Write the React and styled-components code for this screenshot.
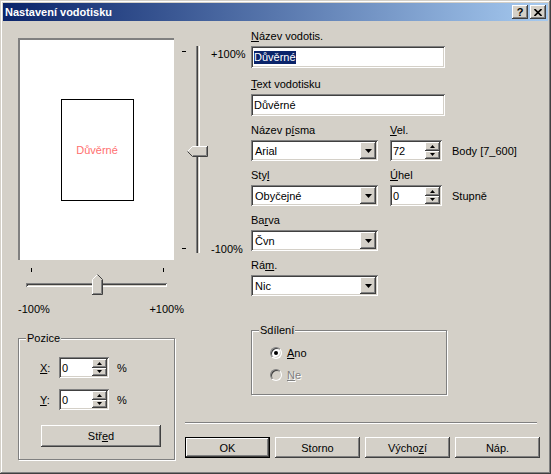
import React from 'react'
import styled, { createGlobalStyle } from 'styled-components'

const face = '#D4D0C8'

const raised = `box-shadow: inset -1px -1px #404040, inset 1px 1px #fff, inset -2px -2px #808080, inset 2px 2px ${face};`
const sunken = `box-shadow: inset 1px 1px #808080, inset -1px -1px #fff, inset 2px 2px #404040, inset -2px -2px ${face};`

const GlobalStyle = createGlobalStyle`
  html, body {
    margin: 0;
    padding: 0;
    background: ${face};
    overflow: hidden;
  }
`

const Window = styled.div`
  width: 551px;
  height: 474px;
  box-sizing: border-box;
  padding: 3px;
  background: ${face};
  box-shadow: inset -1px -1px #404040, inset 1px 1px ${face}, inset -2px -2px #808080, inset 2px 2px #fff;
  display: flex;
  flex-direction: column;
  font: 11px 'Liberation Sans', Arial, sans-serif;
  color: #000;
`

const TitleBar = styled.div`
  height: 18px;
  flex-shrink: 0;
  display: flex;
  align-items: center;
  padding: 0 2px 0 2px;
  background: linear-gradient(to right, #0a246a, #a6caf0);
  color: #fff;
  font-weight: bold;
`

const TitleText = styled.div`
  flex: 1;
  white-space: nowrap;
`

const CaptionButtons = styled.div`
  display: flex;
  gap: 2px;
`

const CaptionButton = styled.div`
  width: 16px;
  height: 14px;
  box-sizing: border-box;
  background: ${face};
  ${raised}
  display: flex;
  align-items: center;
  justify-content: center;
  color: #000;
  font-weight: bold;
  font-size: 11px;
  line-height: 14px;
`

const Body = styled.div`
  flex: 1;
  display: flex;
  padding: 0 8px 0 15px;
`

const LeftCol = styled.div`
  width: 157px;
  flex-shrink: 0;
  padding-top: 17px;
  display: flex;
  flex-direction: column;
`

const Preview = styled.div`
  width: 156px;
  height: 222px;
  box-sizing: border-box;
  background: #fff;
  border-top: 2px solid #808080;
  border-left: 2px solid #808080;
  display: flex;
  align-items: center;
  justify-content: center;
`

const Page = styled.div`
  width: 73px;
  height: 102px;
  box-sizing: border-box;
  border: 1px solid #000;
  display: flex;
  align-items: center;
  justify-content: center;
  color: #ff6f6f;
`

const HSlider = styled.div`
  position: relative;
  height: 38px;
  width: 157px;
`

const HTicks = styled.div`
  display: flex;
  justify-content: space-between;
  padding: 8px 11px 0 13px;
`

const HTick = styled.div`
  width: 1px;
  height: 4px;
  background: #000;
`

const HTrack = styled.div`
  margin: 11px 0 0 8px;
  width: 141px;
  height: 4px;
  box-sizing: border-box;
  ${sunken}
`

const HThumb = styled.svg`
  position: absolute;
  left: 74px;
  top: 14px;
`

const HLabels = styled.div`
  width: 166px;
  margin-top: 5px;
  display: flex;
  justify-content: space-between;
  line-height: 13px;
`

const GroupBox = styled.div`
  position: relative;
  border: 1px solid #808080;
  box-shadow: inset 1px 1px #fff, 1px 1px #fff;
  margin-top: ${p => p.$top}px;
  width: ${p => p.$width}px;
  box-sizing: border-box;
  padding: ${p => p.$pad};
`

const GroupTitle = styled.div`
  position: absolute;
  top: -7px;
  left: 7px;
  padding: 0 1px;
  background: ${face};
  line-height: 13px;
`

const PosRow = styled.div`
  display: flex;
  align-items: center;
  padding-left: 21px;
  margin-top: ${p => p.$top || 0}px;
`

const PosLabel = styled.div`
  width: 19px;
`

const Percent = styled.div`
  margin-left: 8px;
`

const Button = styled.div`
  width: ${p => p.$width || 85}px;
  height: ${p => p.$height || 21}px;
  box-sizing: border-box;
  background: ${face};
  display: flex;
  align-items: center;
  justify-content: center;
  margin: ${p => p.$margin || 0};
  ${p =>
    p.$default
      ? `box-shadow: inset 0 0 0 1px #000, inset -2px -2px #404040, inset 2px 2px #fff, inset -3px -3px #808080, inset 3px 3px ${face};`
      : raised}
`

const RightArea = styled.div`
  flex: 1;
  margin-left: 6px;
  display: flex;
  flex-direction: column;
`

const TopRow = styled.div`
  display: flex;
`

const VSlider = styled.div`
  width: 70px;
  flex-shrink: 0;
  padding-top: 23px;
  display: flex;
  align-items: flex-start;
`

const VLabels = styled.div`
  margin: 4px 0 0 3px;
  height: 208px;
  display: flex;
  flex-direction: column;
  justify-content: space-between;
  line-height: 13px;
`

const Fields = styled.div`
  display: flex;
  flex-direction: column;
  padding-top: 9px;
`

const FieldRow = styled.div`
  display: flex;
  gap: 12px;
  margin-top: ${p => p.$top || 0}px;
`

const Field = styled.div`
  display: flex;
  flex-direction: column;
  width: ${p => (p.$width ? `${p.$width}px` : 'auto')};
`

const Label = styled.div`
  line-height: 13px;
  white-space: nowrap;
  margin-bottom: 3px;
`

const TextBox = styled.div`
  width: ${p => p.$width}px;
  height: 22px;
  box-sizing: border-box;
  background: #fff;
  ${sunken}
  display: flex;
  align-items: center;
  padding: 0 3px;
  white-space: nowrap;
`

const Selected = styled.span`
  background: #0a246a;
  color: #fff;
  line-height: 13px;
`

const SelectBox = styled.div`
  width: 127px;
  height: 21px;
  box-sizing: border-box;
  background: #fff;
  ${sunken}
  display: flex;
  align-items: center;
  padding: 2px 2px 2px 4px;
`

const SelectText = styled.div`
  flex: 1;
`

const DropButton = styled.div`
  width: 16px;
  height: 17px;
  box-sizing: border-box;
  background: ${face};
  ${raised}
  display: flex;
  align-items: center;
  justify-content: center;
`

const SpinLine = styled.div`
  display: flex;
  align-items: center;
`

const SpinBox = styled.div`
  width: ${p => p.$width}px;
  height: 21px;
  box-sizing: border-box;
  background: #fff;
  ${sunken}
  display: flex;
  align-items: stretch;
  padding: 2px;
`

const SpinText = styled.div`
  flex: 1;
  display: flex;
  align-items: center;
  padding-left: 1px;
`

const SpinButtons = styled.div`
  width: 15px;
  display: flex;
  flex-direction: column;
`

const SpinButton = styled.div`
  flex: 1;
  background: ${face};
  ${raised}
  display: flex;
  align-items: center;
  justify-content: center;
`

const Unit = styled.div`
  margin-left: 10px;
  white-space: nowrap;
`

const RadioRow = styled.div`
  display: flex;
  align-items: center;
  gap: 5px;
  height: 16px;
  margin-top: ${p => p.$top || 0}px;
  color: ${p => (p.$disabled ? '#808080' : '#000')};
  text-shadow: ${p => (p.$disabled ? '1px 1px #fff' : 'none')};
`

const RadioCircle = styled.div`
  width: 12px;
  height: 12px;
  box-sizing: border-box;
  border-radius: 50%;
  border: 1px solid;
  border-color: #808080 #fff #fff #808080;
  box-shadow: inset 1px 1px #404040, inset -1px -1px ${face};
  background: ${p => (p.$disabled ? face : '#fff')};
  display: flex;
  align-items: center;
  justify-content: center;
`

const RadioDot = styled.div`
  width: 4px;
  height: 4px;
  border-radius: 50%;
  background: #000;
`

const Separator = styled.div`
  width: 352px;
  margin: 27px 0 0 4px;
  border-top: 1px solid #808080;
  border-bottom: 1px solid #fff;
`

const ButtonRow = styled.div`
  display: flex;
  gap: 5px;
  margin: 13px 0 0 4px;
`

const DownArrow = ({ w = 7 }) => (
  <svg width={w} height={(w + 1) / 2} viewBox={`0 0 ${w} ${(w + 1) / 2}`}>
    <polygon points={`0,0 ${w},0 ${w / 2},${(w + 1) / 2}`} fill="#000" />
  </svg>
)

const UpArrow = ({ w = 5 }) => (
  <svg width={w} height={(w + 1) / 2} viewBox={`0 0 ${w} ${(w + 1) / 2}`}>
    <polygon points={`0,${(w + 1) / 2} ${w},${(w + 1) / 2} ${w / 2},0`} fill="#000" />
  </svg>
)

const Select = ({ value }) => (
  <SelectBox>
    <SelectText>{value}</SelectText>
    <DropButton>
      <DownArrow />
    </DropButton>
  </SelectBox>
)

const Spin = ({ value, width }) => (
  <SpinBox $width={width}>
    <SpinText>{value}</SpinText>
    <SpinButtons>
      <SpinButton>
        <UpArrow />
      </SpinButton>
      <SpinButton>
        <DownArrow w={5} />
      </SpinButton>
    </SpinButtons>
  </SpinBox>
)

const UpThumb = () => (
  <HThumb width="11" height="21" viewBox="0 0 11 21">
    <polygon points="0,5 5,0 10,5 10,20 0,20" fill={face} />
    <polyline points="0.5,20 0.5,5.5 5.5,0.5" fill="none" stroke="#fff" />
    <polyline points="5.5,0.5 10.5,5.5 10.5,20.5 0,20.5" fill="none" stroke="#404040" />
    <polyline points="9.5,6 9.5,19.5 1,19.5" fill="none" stroke="#808080" />
  </HThumb>
)

const VerticalTrack = () => (
  <svg width="27" height="212" viewBox="0 0 27 212">
    <rect x="1" y="7" width="4" height="1" fill="#000" />
    <rect x="1" y="204" width="4" height="1" fill="#000" />
    <rect x="15" y="2" width="1" height="207" fill="#808080" />
    <rect x="16" y="2" width="1" height="207" fill="#404040" />
    <rect x="17" y="2" width="1" height="207" fill={face} />
    <rect x="18" y="2" width="1" height="207" fill="#fff" />
    <g transform="translate(6,102)">
      <polygon points="0,5 5,0 20,0 20,10 5,10" fill={face} />
      <polyline points="0.5,5.5 5.5,0.5 20,0.5" fill="none" stroke="#fff" />
      <polyline points="20.5,0 20.5,10.5 5.5,10.5 0.5,5.5" fill="none" stroke="#404040" />
      <polyline points="19.5,1 19.5,9.5 6,9.5" fill="none" stroke="#808080" />
    </g>
  </svg>
)

export default function App() {
  return (
    <>
      <GlobalStyle />
      <Window>
        <TitleBar>
          <TitleText>Nastavení vodotisku</TitleText>
          <CaptionButtons>
            <CaptionButton>?</CaptionButton>
            <CaptionButton>
              <svg width="8" height="7" viewBox="0 0 8 7">
                <path d="M0.5 0 L7.5 7 M7.5 0 L0.5 7" stroke="#000" strokeWidth="1.6" />
              </svg>
            </CaptionButton>
          </CaptionButtons>
        </TitleBar>

        <Body>
          <LeftCol>
            <Preview>
              <Page>Důvěrné</Page>
            </Preview>

            <HSlider>
              <HTicks>
                <HTick />
                <HTick />
              </HTicks>
              <HTrack />
              <UpThumb />
            </HSlider>

            <HLabels>
              <span>-100%</span>
              <span>+100%</span>
            </HLabels>

            <GroupBox $top={22} $width={157} $pad="18px 0 12px 0">
              <GroupTitle>Pozice</GroupTitle>
              <PosRow>
                <PosLabel>
                  <u>X</u>:
                </PosLabel>
                <Spin value="0" width={50} />
                <Percent>%</Percent>
              </PosRow>
              <PosRow $top={11}>
                <PosLabel>
                  <u>Y</u>:
                </PosLabel>
                <Spin value="0" width={50} />
                <Percent>%</Percent>
              </PosRow>
              <Button $width={120} $height={22} $margin="15px 0 0 22px">
                <span>
                  Stř<u>e</u>d
                </span>
              </Button>
            </GroupBox>
          </LeftCol>

          <RightArea>
            <TopRow>
              <VSlider>
                <VerticalTrack />
                <VLabels>
                  <span>+100%</span>
                  <span>-100%</span>
                </VLabels>
              </VSlider>

              <Fields>
                <Label>
                  <u>N</u>ázev vodotis.
                </Label>
                <TextBox $width={194}>
                  <Selected>Důvěrné</Selected>
                </TextBox>

                <FieldRow $top={10}>
                  <Field>
                    <Label>
                      <u>T</u>ext vodotisku
                    </Label>
                    <TextBox $width={194}>Důvěrné</TextBox>
                  </Field>
                </FieldRow>

                <FieldRow $top={8}>
                  <Field $width={127}>
                    <Label>
                      Název p<u>í</u>sma
                    </Label>
                    <Select value="Arial" />
                  </Field>
                  <Field>
                    <Label>
                      <u>V</u>el.
                    </Label>
                    <SpinLine>
                      <Spin value="72" width={52} />
                      <Unit>Body [7_600]</Unit>
                    </SpinLine>
                  </Field>
                </FieldRow>

                <FieldRow $top={8}>
                  <Field $width={127}>
                    <Label>
                      Sty<u>l</u>
                    </Label>
                    <Select value="Obyčejné" />
                  </Field>
                  <Field>
                    <Label>
                      <u>Ú</u>hel
                    </Label>
                    <SpinLine>
                      <Spin value="0" width={52} />
                      <Unit>Stupně</Unit>
                    </SpinLine>
                  </Field>
                </FieldRow>

                <FieldRow $top={8}>
                  <Field $width={127}>
                    <Label>
                      Ba<u>r</u>va
                    </Label>
                    <Select value="Čvn" />
                  </Field>
                </FieldRow>

                <FieldRow $top={8}>
                  <Field $width={127}>
                    <Label>
                      Rá<u>m</u>.
                    </Label>
                    <Select value="Nic" />
                  </Field>
                </FieldRow>

                <GroupBox $top={34} $width={196} $pad="14px 0 11px 18px">
                  <GroupTitle>Sdílení</GroupTitle>
                  <RadioRow>
                    <RadioCircle>
                      <RadioDot />
                    </RadioCircle>
                    <span>
                      <u>A</u>no
                    </span>
                  </RadioRow>
                  <RadioRow $top={6} $disabled>
                    <RadioCircle $disabled />
                    <span>
                      <u>N</u>e
                    </span>
                  </RadioRow>
                </GroupBox>
              </Fields>
            </TopRow>

            <Separator />

            <ButtonRow>
              <Button $default>OK</Button>
              <Button>Storno</Button>
              <Button>
                <span>
                  Výcho<u>z</u>í
                </span>
              </Button>
              <Button>Náp.</Button>
            </ButtonRow>
          </RightArea>
        </Body>
      </Window>
    </>
  )
}
